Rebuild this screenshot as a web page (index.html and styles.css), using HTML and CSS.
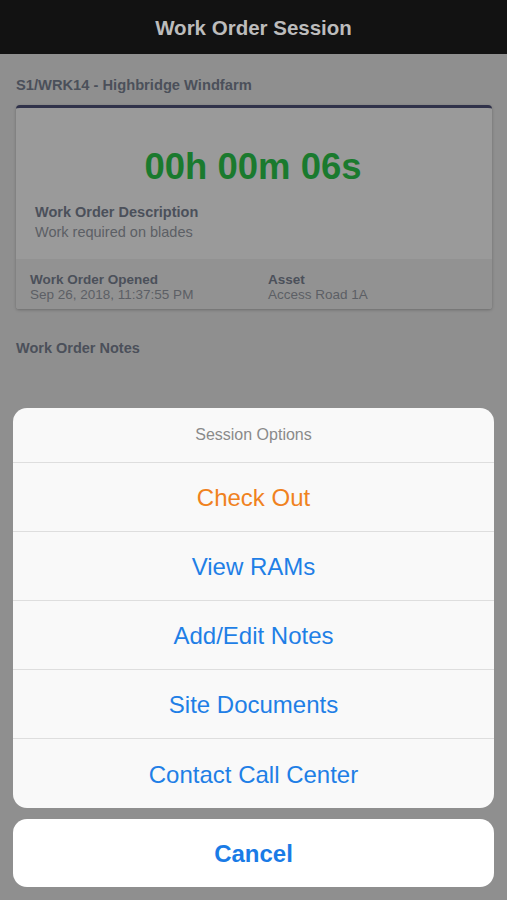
FILE: index.html
```html
<!DOCTYPE html>
<html>
<head>
<meta charset="utf-8">
<link rel="stylesheet" href="styles.css">
</head>
<body>
<div class="screen">
  <header class="navbar">Work Order Session</header>
  <main class="content">
    <h2 class="wo-title">S1/WRK14 - Highbridge Windfarm</h2>
    <section class="card">
      <div class="card-body">
        <div class="timer">00h 00m 06s</div>
        <div class="field">
          <div class="label">Work Order Description</div>
          <div class="value">Work required on blades</div>
        </div>
      </div>
      <div class="card-footer">
        <div class="col">
          <div class="label small">Work Order Opened</div>
          <div class="value small">Sep 26, 2018, 11:37:55 PM</div>
        </div>
        <div class="col">
          <div class="label small">Asset</div>
          <div class="value small">Access Road 1A</div>
        </div>
      </div>
    </section>
    <h3 class="notes-title">Work Order Notes</h3>
  </main>
  <div class="overlay">
    <div class="sheet">
      <div class="sheet-title">Session Options</div>
      <div class="sheet-item warn">Check Out</div>
      <div class="sheet-item">View RAMs</div>
      <div class="sheet-item">Add/Edit Notes</div>
      <div class="sheet-item">Site Documents</div>
      <div class="sheet-item">Contact Call Center</div>
    </div>
    <div class="cancel">Cancel</div>
  </div>
</div>
</body>
</html>
```

FILE: styles.css
```css
* { box-sizing: border-box; margin: 0; padding: 0; }
html, body { width: 507px; height: 900px; overflow: hidden; }
body {
  font-family: "Liberation Sans", Arial, sans-serif;
  background: #8f8f8f;
}
.screen {
  position: relative;
  width: 507px;
  height: 900px;
  background: #8f8f8f;
}
.navbar {
  height: 54px;
  background: #121212;
  color: #bcbcbc;
  font-weight: bold;
  font-size: 20.5px;
  display: flex;
  align-items: center;
  justify-content: center;
  padding-top: 2px;
}
.content {
  padding: 0 15px 0 16px;
}
.wo-title {
  font-size: 14.7px;
  font-weight: bold;
  color: #4b505a;
  line-height: 18px;
  margin-top: 22px;
}
.card {
  margin-top: 11px;
  background: #9a9a9a;
  border-top: 3px solid #30324a;
  border-radius: 4px 4px 3px 3px;
  box-shadow: 0 1px 3px rgba(0,0,0,0.25);
  overflow: hidden;
}
.card-body {
  padding: 0 19px 0 19px;
  height: 151px;
}
.timer {
  text-align: center;
  color: #1a7a2e;
  font-weight: bold;
  font-size: 36.5px;
  line-height: 40px;
  padding-top: 39px;
  padding-right: 2px;
}
.field { margin-top: 15px; }
.label {
  font-weight: bold;
  font-size: 14.5px;
  color: #4b505a;
  line-height: 20px;
}
.value {
  font-size: 14.5px;
  color: #5c5f65;
  line-height: 20px;
}
.card-footer {
  background: #929292;
  height: 50px;
  display: grid;
  grid-template-columns: 238px 1fr;
  padding: 13px 14px 0 14px;
}
.label.small, .value.small {
  font-size: 13.5px;
  line-height: 15px;
}
.notes-title {
  font-size: 14.5px;
  font-weight: bold;
  color: #4b505a;
  line-height: 18px;
  margin-top: 30px;
}
.overlay {
  position: absolute;
  inset: 0;
  display: flex;
  flex-direction: column;
  justify-content: flex-end;
  gap: 11px;
  padding: 0 13px 13px 13px;
}
.sheet {
  background: #f9f9f9;
  border-radius: 14px;
  overflow: hidden;
}
.sheet-title {
  height: 55px;
  display: flex;
  align-items: center;
  justify-content: center;
  font-size: 16px;
  color: #8a8a8a;
  border-bottom: 1px solid #dedede;
}
.sheet-item {
  height: 69px;
  display: flex;
  align-items: center;
  justify-content: center;
  font-size: 24px;
  color: #1f7fe6;
  border-bottom: 1px solid #dedede;
  padding-top: 2px;
}
.sheet-item:last-child { border-bottom: none; }
.sheet-item.warn { color: #f0821e; }
.cancel {
  height: 68px;
  background: #ffffff;
  border-radius: 14px;
  display: flex;
  align-items: center;
  justify-content: center;
  font-size: 24px;
  font-weight: bold;
  color: #1a7be6;
  padding-top: 2px;
}
```
